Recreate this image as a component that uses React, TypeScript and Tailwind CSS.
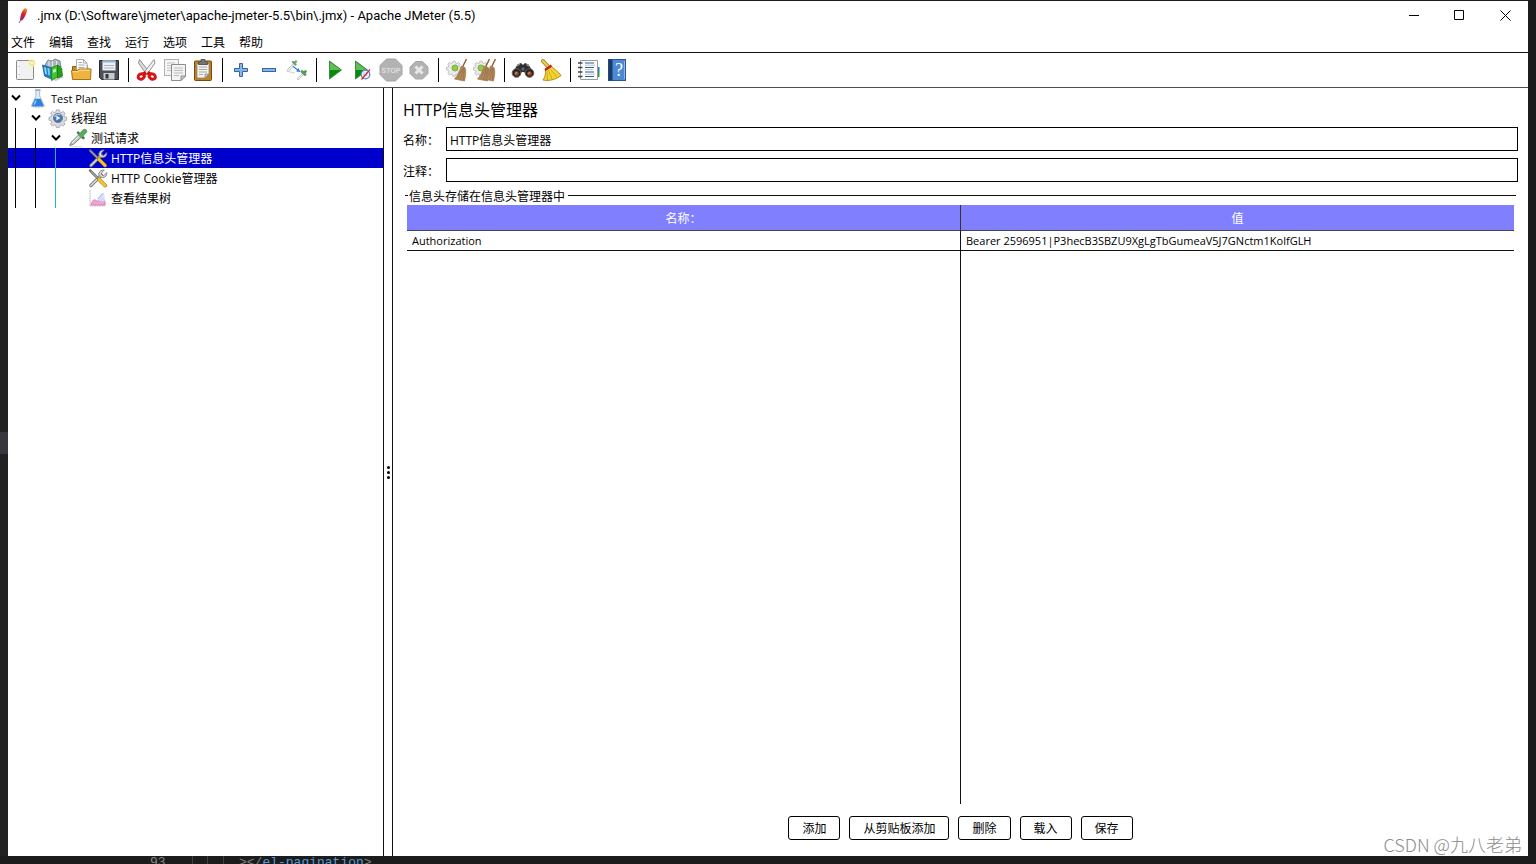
import { useState } from 'react'
import type { ReactNode } from 'react'
import clsx from 'clsx'

const Svg = ({ children, className = 'w-6 h-6' }: { children: ReactNode; className?: string }) => (
  <svg viewBox="0 0 24 24" className={clsx('shrink-0', className)} fill="none" aria-hidden="true">
    {children}
  </svg>
)

const NewIcon = () => (
  <Svg>
    <rect x="3.500" y="2.500" width="17" height="19" rx="0.8" fill="#f1f1f1" stroke="#8b8b8b" />
    <path d="M5.500 4v16" stroke="#fff" />
    <path d="M6 8v1M6 16v1" stroke="#a5a5a5" />
    <circle cx="19" cy="5" r="4" fill="#fbf3a8" opacity="0.7" />
    <circle cx="19" cy="5" r="2" fill="#fffde0" stroke="#f0dd6a" />
  </Svg>
)

const TemplatesIcon = () => (
  <Svg>
    <path d="M4 7l3-5 4 1 3-2 5 2 1 6-13 1z" fill="#a9b4bb" stroke="#66747c" strokeWidth="0.8" />
    <path d="M8 3v5M11.500 3v5M15.500 3v5" stroke="#e7edf0" />
    <path d="M1.500 7l9 3v11l-7-3z" fill="#1b83c4" stroke="#0e5e94" strokeWidth="0.8" />
    <path d="M3 9l2 .6 1 7-2-.8zM6.500 10l2 .6.3 7-1.500-.6z" fill="#8fd0f4" />
    <path d="M20 18l3 1-8 4-3-1z" fill="#999" opacity="0.5" />
    <path d="M10.500 10l6-3v12l-6 3.500z" fill="#43c431" stroke="#1c8516" strokeWidth="0.8" />
    <path d="M16.500 7l4 3 1 8-5 2z" fill="#27a01c" stroke="#1a7413" strokeWidth="0.8" />
    <path d="M12 12l3-1.400v3L12 15z" fill="#c2f2b5" />
  </Svg>
)

const OpenIcon = () => (
  <Svg>
    <path d="M3.500 20V8.500h4L9 7h9v4h2.500v9z" fill="#c98a1b" stroke="#8f5e0a" />
    <path d="M7.500 12V1.500h7L18 5v7z" fill="#fafafa" stroke="#9a9a9a" strokeWidth="0.8" />
    <path d="M14.500 1.500V5H18M9.500 4.500h3.500M9.500 7h6M9.500 9.500h6" stroke="#999" strokeWidth="0.8" />
    <path d="M2.500 12.500h6l1.500-1.500h12l-.5 10.500h-18z" fill="#eeb440" stroke="#a8730f" />
    <path d="M3.500 13.700h5.500l1.500-1.500h10.500" stroke="#fde19a" />
  </Svg>
)

const SaveIcon = () => (
  <Svg>
    <path d="M2.500 2.500h19v19h-17l-2-2z" fill="#4c5056" stroke="#25282c" />
    <rect x="5.500" y="2.500" width="13" height="10" fill="#eef2f6" />
    <path d="M5.500 3.500h13" stroke="#8cb4dd" strokeWidth="2" />
    <path d="M7 7.500h10M7 10h10" stroke="#a9b3bd" />
    <rect x="6.500" y="15" width="11" height="6.500" fill="#c7cacd" />
    <rect x="8.500" y="16" width="3" height="4.500" fill="#33363a" />
  </Svg>
)

const CutIcon = () => (
  <Svg>
    <path d="M4.500 1.500L14.500 14.500l-3 2L3.500 5z" fill="#dcdcdc" stroke="#858585" strokeWidth="0.9" />
    <path d="M19 1.500L9 14.500l3 2L20 5z" fill="#f1f1f1" stroke="#858585" strokeWidth="0.9" />
    <path d="M11 14.500L7 17M12.500 14.500L16.500 17" stroke="#c80e0e" strokeWidth="3.500" />
    <ellipse cx="6.300" cy="18.500" rx="3.300" ry="2.500" stroke="#d81414" strokeWidth="3" transform="rotate(-25 6.300 18.500)" />
    <ellipse cx="17.200" cy="18.500" rx="3.300" ry="2.500" stroke="#d81414" strokeWidth="3" transform="rotate(25 17.200 18.500)" />
  </Svg>
)

const CopyIcon = () => (
  <Svg>
    <rect x="1.500" y="1.500" width="14" height="16" fill="#f5f5f5" stroke="#b0b0b0" />
    <path d="M4 5h8M4 7.500h8M4 10h4M4 12.500h4" stroke="#c4c4c4" />
    <path d="M8.500 6.500h14V18L18 22.500H8.500z" fill="#f3f3f3" stroke="#8c8c8c" />
    <path d="M11 10h9M11 12.500h9M11 15h9M11 17.500h5" stroke="#bcbcbc" />
    <path d="M18 22.500V18h4.500z" fill="#d2d2d2" stroke="#8c8c8c" />
  </Svg>
)

const PasteIcon = () => (
  <Svg>
    <rect x="3.500" y="3" width="17" height="19.500" rx="1" fill="#bd8022" stroke="#764a0b" />
    <path d="M6 5.500h12V16l-4 4H6z" fill="#f3f3f1" stroke="#888" strokeWidth="0.8" />
    <path d="M14 20v-4h4z" fill="#cfcfcf" stroke="#888" strokeWidth="0.8" />
    <path d="M8 9h8M8 11.500h8M8 14h8M8 16.500h4" stroke="#aaa" />
    <path d="M7.500 6.500V4.500L10 3.500V1.500h4v2l2.500 1v2z" fill="#777" stroke="#444" strokeWidth="0.8" />
  </Svg>
)

const PlusIcon = () => (
  <Svg>
    <path d="M10.500 5.500h3v5h5v3h-5v5h-3v-5h-5v-3h5z" fill="#8ab4e4" stroke="#3465a4" />
  </Svg>
)

const MinusIcon = () => (
  <Svg>
    <rect x="5.500" y="10.500" width="13" height="3" fill="#8ab4e4" stroke="#3465a4" />
  </Svg>
)

const ToggleIcon = () => (
  <Svg>
    <path d="M3 12.500L8.500 6.500" stroke="#a9b0a9" strokeWidth="2.400" strokeLinecap="round" />
    <path d="M3 12.500L8.500 6.500" stroke="#f2f5f2" strokeWidth="1.200" strokeLinecap="round" />
    <path d="M8 4l2.500 2.500M9.500 5l1.500-1.500" stroke="#6aa567" strokeWidth="2.400" strokeLinecap="round" />
    <path d="M13 21L17.500 16.500" stroke="#a9b0a9" strokeWidth="2.400" strokeLinecap="round" />
    <path d="M13 21L17.500 16.500" stroke="#f2f5f2" strokeWidth="1.200" strokeLinecap="round" />
    <path d="M17 13.500l3 3M19 15l1.500-1.500" stroke="#569a55" strokeWidth="2.800" strokeLinecap="round" />
    <path d="M8 8.500l5 3.500" stroke="#2f7de8" strokeWidth="1.200" />
    <path d="M15.500 14l-4.500-.5 2.500-3.500z" fill="#2f7de8" />
    <path d="M3 13.500l7 1.500" stroke="#c4c4c4" strokeWidth="0.800" />
  </Svg>
)

const Triangle = ({ x = 6, y = 12 }: { x?: number; y?: number }) => (
  <g transform={`translate(${x} ${y})`}>
    <path d="M.5 -9L12.500 0 .5 9z" fill="#2f9f2f" stroke="#2b7a2b" strokeWidth="0.800" />
    <path d="M1 -7.800L11.500 0H1z" fill="#5fbd5c" />
    <path d="M1 0H11.500L1 8z" fill="#078a0c" />
  </g>
)

const StartIcon = () => (
  <Svg>
    <Triangle />
  </Svg>
)

const StartNoPauseIcon = () => (
  <Svg>
    <Triangle x={4} />
    <circle cx="14.500" cy="16.500" r="4.300" fill="#eaf1fb" stroke="#5a86c4" strokeWidth="1.300" />
    <path d="M13 14.500v4M15.500 14v4" stroke="#a9c0e2" />
    <path d="M10.500 21.500L19 11.500" stroke="#e0232b" strokeWidth="1.200" />
  </Svg>
)

const StopIcon = () => (
  <Svg>
    <path d="M7.500 1h9L23 7.500v9L16.500 23h-9L1 16.500v-9z" fill="#b3b3b3" stroke="#a2a2a2" />
    <text x="12" y="15" textAnchor="middle" className="text-[7px] font-bold" fill="#dedede" fontFamily="Liberation Sans, sans-serif">STOP</text>
  </Svg>
)

const ShutdownIcon = () => (
  <Svg>
    <path d="M8.500 3.500h7L21 9v6.500L15.500 21h-7L3 15.500V9z" fill="#b3b3b3" stroke="#a6a6a6" />
    <path d="M8.500 8.500l7 7M15.500 8.500l-7 7" stroke="#e8e8e8" strokeWidth="3" />
  </Svg>
)

const GEAR =
  'M8.500 1.500h3l.5 2.200 1.700.7 2-1.200 2 2-1.200 2 .7 1.700 2.200.6v3l-2.200.5-.7 1.700 1.200 2-2 2-2-1.200-1.700.7-.5 2.200h-3L8 18.200l-1.700-.7-2 1.200-2-2 1.200-2-.7-1.700L.600 12.500v-3L2.800 8.900l.7-1.700-1.200-2 2-2 2 1.200L8 3.700z'

const Broom = ({ x }: { x: number }) => (
  <g transform={`translate(${x} 0)`}>
    <path d="M20.500 1L16.500 9" stroke="#8a5a2c" strokeWidth="1.400" />
    <path d="M15.500 8l3.500 1.500c1.500 3 .5 9-.5 13.500L8.500 21c3-3 5-8 7-13z" fill="#b68b5c" stroke="#9a7248" strokeWidth="0.700" />
    <path d="M16.500 10l-5 11M17.500 10l-3 12M18.200 10.500L17.500 22" stroke="#8b6740" strokeWidth="0.600" />
  </g>
)

const ClearIcon = () => (
  <Svg>
    <g transform="translate(1 2) scale(0.800)">
      <path d={GEAR} fill="#ebebeb" stroke="#b5b5b5" />
    </g>
    <circle cx="10" cy="10" r="3" fill="#8fcf45" stroke="#709e3b" strokeWidth="0.800" />
    <Broom x={1} />
  </Svg>
)

const ClearAllIcon = () => (
  <Svg>
    <g transform="translate(0 2) scale(0.800)">
      <path d={GEAR} fill="#ebebeb" stroke="#b5b5b5" />
    </g>
    <circle cx="8" cy="10" r="3" fill="#8fcf45" stroke="#709e3b" strokeWidth="0.800" />
    <Broom x={-4} />
    <Broom x={2} />
  </Svg>
)

const SearchIcon = () => (
  <Svg>
    <path d="M2 14L6.500 6.500 10 5l2 2 2-2 3.500 1.500L22 14l-5 4-4-4h-2l-4 4z" fill="#2e2e2e" />
    <path d="M6 8l3-2M15.500 6.500L18 8" stroke="#929292" strokeWidth="1.500" />
    <circle cx="5.500" cy="15" r="4.300" fill="#222" stroke="#626262" />
    <circle cx="18.500" cy="15" r="4.300" fill="#222" stroke="#626262" />
    <circle cx="5.500" cy="15.500" r="2.300" fill="#9a4f2a" />
    <circle cx="18.500" cy="15.500" r="2.300" fill="#9a4f2a" />
    <path d="M4 15.500l2-1M17 15.500l2-1" stroke="#ef9c65" />
    <rect x="10.500" y="9.500" width="3" height="3" fill="#666" />
  </Svg>
)

const ResetSearchIcon = () => (
  <Svg>
    <path d="M4 3L9 8.500" stroke="#a3841c" strokeWidth="4" strokeLinecap="round" />
    <path d="M4 3L9 8.500" stroke="#f0cf4a" strokeWidth="2" strokeLinecap="round" />
    <path d="M12.500 8.500c3 2.500 7 5.500 9.500 9-4 3.500-11.500 6-18 4.500 2.500-3 2.500-6.500 2.500-10z" fill="#f2d535" stroke="#a6830b" strokeWidth="0.900" />
    <path d="M11.500 11.500l7 8M9.500 12.500l4 9.500M8 13.500l.5 8.500" stroke="#c7a41c" strokeWidth="0.900" />
    <path d="M6 12L12.500 7.500" stroke="#c32222" strokeWidth="2.600" />
  </Svg>
)

const FunctionIcon = () => (
  <Svg>
    <rect x="20" y="9" width="2.500" height="5" fill="#2577d0" />
    <rect x="20" y="14" width="2.500" height="5" fill="#2f9b36" />
    <path d="M3.500 2.500h17v19h-17z" fill="#fdfdfd" stroke="#9a9a9a" />
    <path d="M8 5h9M8 9.500h9M8 14h9M8 18.500h9" stroke="#2f5f9d" strokeWidth="1.200" />
    <path d="M8 7.200h10M8 11.700h8M8 16.200h10" stroke="#a5b6cc" strokeWidth="0.800" />
    <path d="M1 5h4.500M1 9.500h4.500M1 14h4.500M1 18.500h4.500" stroke="#444" strokeWidth="1.500" />
  </Svg>
)

const HelpIcon = () => (
  <Svg>
    <rect x="3.500" y="1.500" width="17" height="21" fill="#4b88d6" stroke="#2a5596" />
    <rect x="3.500" y="1.500" width="4" height="21" fill="#1d3a66" />
    <path d="M19.500 3v18" stroke="#8db9ef" />
    <text x="14" y="18" textAnchor="middle" className="text-[18px]" fill="#fff" fontFamily="Liberation Serif, serif">?</text>
  </Svg>
)

const FlaskIcon = () => (
  <Svg className="w-5 h-5">
    <ellipse cx="12" cy="21.500" rx="8.500" ry="2" fill="#bcc7d2" />
    <path d="M9.500 2.500h4.500v7l5 11c0 1.500-1 2-2 2H6.500c-1.500 0-2-1-2-2l5-11z" fill="#e6edf5" stroke="#9bafc4" />
    <path d="M8.500 13h6.500l3.500 7.500c0 1-.5 1.500-1.500 1.500H6.500c-1 0-1.500-.5-1.500-1.500z" fill="#2b83dd" />
    <path d="M9.500 15l-2 5" stroke="#9dcffa" strokeWidth="1.500" />
    <path d="M8.500 2.500h6.500" stroke="#8a9db1" strokeWidth="1.500" />
  </Svg>
)

const GearIcon = () => (
  <Svg className="w-5 h-5">
    <g transform="translate(0.500 0.500) scale(1.130)">
      <path d={GEAR} fill="#dadcdf" stroke="#a1a6ad" strokeWidth="0.900" />
    </g>
    <circle cx="12" cy="12" r="5.500" fill="#4a74ad" stroke="#5c7699" />
    <path d="M8 11a4.500 4.500 0 0 1 7-2.500" stroke="#a9c6ea" strokeWidth="1.600" />
    <path d="M10 9l5 3-5 3z" fill="#e6eef8" />
  </Svg>
)

const PipetteIcon = () => (
  <Svg className="w-5 h-5">
    <path d="M3 22.500h14" stroke="#d9d9d9" strokeWidth="1.200" />
    <path d="M2 21l2-4L13 8l3 3-9.500 8.500z" fill="#bcc3bc" stroke="#7c857c" strokeWidth="1.200" />
    <path d="M5 18l8-8" stroke="#fff" strokeWidth="1.200" />
    <path d="M12 5.500l6.500 6.500" stroke="#3c7a41" strokeWidth="3" strokeLinecap="round" />
    <path d="M16 8l4-4" stroke="#5ba95c" strokeWidth="6" strokeLinecap="round" />
  </Svg>
)

const ToolsIcon = () => (
  <Svg className="w-5 h-5">
    <path d="M3.500 21L16 8.500" stroke="#777" strokeWidth="4" strokeLinecap="round" />
    <path d="M3.500 21L16 8.500" stroke="#d8d8d8" strokeWidth="2" strokeLinecap="round" />
    <path d="M19.500 2.500L16 6l.5 2.500 2.500.5 3.500-3.500c.7 3-1.500 6-5 6-3.500 0-5-2.500-4.500-5 .5-2.500 3.500-4.700 6.500-4z" fill="#d8d8d8" stroke="#777" />
    <path d="M2.500 3L12 12.500" stroke="#6c6c6c" strokeWidth="3" strokeLinecap="round" />
    <path d="M3 3.500l8.500 8.500" stroke="#d2d2d2" strokeWidth="1" />
    <path d="M13 13.500l7.500 7.500" stroke="#a37809" strokeWidth="4.500" strokeLinecap="round" />
    <path d="M13 13.500l7.500 7.500" stroke="#f5c62c" strokeWidth="3" strokeLinecap="round" />
  </Svg>
)

const GraphIcon = () => (
  <Svg className="w-5 h-5">
    <path d="M2.500 2.500v19h18" stroke="#a3a3a3" strokeDasharray="2 1" />
    <path d="M3.500 20.500c1-4 3-7.500 5.500-6s3 2 5-1 4-1 6.500 3v4z" fill="#f0a4d3" stroke="#d974b4" />
    <path d="M11 13c3-1 4-6 7-6.500 3 0 1.500 6 3 8-3 2.500-7 2-10-1.500z" fill="#cfe2f8" opacity="0.900" />
    <path d="M11.500 13c3-1 3.500-6 7-6.500" stroke="#7eabe2" />
  </Svg>
)

const FeatherIcon = () => (
  <Svg className="w-4 h-4">
    <defs>
      <linearGradient id="feather" x1="16" y1="1" x2="6" y2="20" gradientUnits="userSpaceOnUse">
        <stop offset="0" stopColor="#f69923" />
        <stop offset="0.450" stopColor="#d22128" />
        <stop offset="1" stopColor="#7e2c8b" />
      </linearGradient>
    </defs>
    <path d="M13.500 0.500c3 0 4 2 2.500 6-1.500 4.500-4 9.500-6.500 12L6 19.500C6.500 12 9 3 13.500.5z" fill="url(#feather)" />
    <path d="M6.500 19l-2 3.500" stroke="#7e2c8b" strokeWidth="1.200" />
  </Svg>
)

const toolbar = [
  [
    { label: '新建', Icon: NewIcon },
    { label: '模板', Icon: TemplatesIcon },
    { label: '打开', Icon: OpenIcon },
    { label: '保存测试计划', Icon: SaveIcon },
  ],
  [
    { label: '剪切', Icon: CutIcon },
    { label: '复制', Icon: CopyIcon },
    { label: '粘贴', Icon: PasteIcon },
  ],
  [
    { label: '全部展开', Icon: PlusIcon },
    { label: '全部折叠', Icon: MinusIcon },
    { label: '切换', Icon: ToggleIcon },
  ],
  [
    { label: '启动', Icon: StartIcon },
    { label: '不停顿开始', Icon: StartNoPauseIcon },
    { label: '停止', Icon: StopIcon },
    { label: '关闭', Icon: ShutdownIcon },
  ],
  [
    { label: '清除', Icon: ClearIcon },
    { label: '清除全部', Icon: ClearAllIcon },
  ],
  [
    { label: '查找', Icon: SearchIcon },
    { label: '重置搜索', Icon: ResetSearchIcon },
  ],
  [
    { label: '函数助手', Icon: FunctionIcon },
    { label: '帮助', Icon: HelpIcon },
  ],
]

const menus = ['文件', '编辑', '查找', '运行', '选项', '工具', '帮助']

const tree = [
  { level: 0, label: 'Test Plan', Icon: FlaskIcon, open: true },
  { level: 1, label: '线程组', Icon: GearIcon, open: true },
  { level: 2, label: '测试请求', Icon: PipetteIcon, open: true },
  { level: 3, label: 'HTTP信息头管理器', Icon: ToolsIcon, open: false },
  { level: 3, label: 'HTTP Cookie管理器', Icon: ToolsIcon, open: false },
  { level: 3, label: '查看结果树', Icon: GraphIcon, open: false },
]

const headers = [
  { name: 'Authorization', value: 'Bearer 2596951|P3hecB3SBZU9XgLgTbGumeaV5J7GNctm1KolfGLH' },
]

const actions = ['添加', '从剪贴板添加', '删除', '载入', '保存']

const TitleBar = () => (
  <header className="flex h-[29px] shrink-0 items-center pl-2">
    <FeatherIcon />
    <h1 className="ml-[5px] flex-1 font-['Roboto',sans-serif] text-[13px] whitespace-nowrap">
      .jmx (D:\Software\jmeter\apache-jmeter-5.5\bin\.jmx) - Apache JMeter (5.5)
    </h1>
    <div className="flex h-full">
      <button aria-label="最小化" className="flex w-[46px] items-center justify-center">
        <svg width="11" height="11" fill="none" stroke="#000"><path d="M1 5.500h10" /></svg>
      </button>
      <button aria-label="最大化" className="flex w-[46px] items-center justify-center">
        <svg width="11" height="11" fill="none" stroke="#000"><path d="M.5 .5h9v9h-9z" /></svg>
      </button>
      <button aria-label="关闭窗口" className="flex w-[46px] items-center justify-center">
        <svg width="11" height="11" fill="none" stroke="#000"><path d="M.5 .5l10 10M10.500 .5l-10 10" /></svg>
      </button>
    </div>
  </header>
)

const MenuBar = () => (
  <nav className="flex h-[23px] shrink-0 items-center gap-[14px] border-b border-[#111] pt-[3px] pl-[3px]">
    {menus.map((menu) => (
      <button key={menu}>{menu}</button>
    ))}
  </nav>
)

const Toolbar = () => (
  <div role="toolbar" aria-label="工具栏" className="flex h-[35px] shrink-0 items-center border-b border-[#4d4d4d] pl-[3px]">
    {toolbar.map((group, i) => (
      <div key={i} className="flex items-center">
        {i > 0 && <span className="mx-1 h-6 w-0.5 border-r border-black" />}
        {group.map(({ label, Icon }) => (
          <button key={label} aria-label={label} title={label} className="flex h-7 w-7 items-center justify-center">
            <Icon />
          </button>
        ))}
      </div>
    ))}
  </div>
)

const TestTree = ({ selected, onSelect }: { selected: string; onSelect: (label: string) => void }) => (
  <aside className="w-[376px] shrink-0 border-r border-[#111]">
    {tree.map(({ level, label, Icon, open }) => (
      <button
        key={label}
        onClick={() => onSelect(label)}
        className={clsx('flex h-5 w-full items-center', selected === label && 'bg-[#0000cd] text-white')}
      >
        {Array.from({ length: level }, (_, i) => (
          <span
            key={i}
            className={clsx('ml-[7px] h-full w-[13px] border-l', i === 2 ? 'border-[#1fb5cc]' : 'border-black')}
          />
        ))}
        <span className={clsx('w-5 shrink-0', open && 'pl-[3px]')}>
          {open && (
            <svg width="10" height="8" fill="none" stroke="#000" strokeWidth="2">
              <path d="M1 1.500l4 4 4-4" />
            </svg>
          )}
        </span>
        <Icon />
        <span className={clsx('ml-[3px] pt-0.5 whitespace-nowrap', level === 0 && 'text-[11px]')}>{label}</span>
      </button>
    ))}
  </aside>
)

const HeaderTable = () => (
  <table className="h-full w-full table-fixed border-collapse">
    <thead>
      <tr className="h-[25px] border-b border-[#444] bg-[#8080ff] text-white">
        <th className="border-r border-[#333] p-0 pt-1 font-normal">名称：</th>
        <th className="p-0 pt-1 font-normal">值</th>
      </tr>
    </thead>
    <tbody className="text-[11px]">
      {headers.map(({ name, value }) => (
        <tr key={name} className="h-5 border-b border-[#111]">
          <td className="border-r border-[#111] px-[5px] pt-0.5 pb-0">{name}</td>
          <td className="px-[5px] pt-0.5 pb-0">{value}</td>
        </tr>
      ))}
      <tr>
        <td className="border-r border-[#111]" />
        <td />
      </tr>
    </tbody>
  </table>
)

const HeaderManager = () => {
  const [name, setName] = useState('HTTP信息头管理器')
  const [comment, setComment] = useState('')

  return (
    <main className="flex min-w-0 flex-1 flex-col px-[10px] pt-[10px] pb-4">
      <h2 className="text-base leading-6">HTTP信息头管理器</h2>
      <div className="mt-[5px] flex items-center">
        <label htmlFor="name" className="w-[43px] pt-[3px]">名称：</label>
        <input
          id="name"
          value={name}
          onChange={(e) => setName(e.target.value)}
          className="h-6 min-w-0 flex-1 border border-black px-[3px] pt-0.5 outline-none"
        />
      </div>
      <div className="mt-[7px] flex items-center">
        <label htmlFor="comment" className="w-[43px] pt-[3px]">注释：</label>
        <input
          id="comment"
          value={comment}
          onChange={(e) => setComment(e.target.value)}
          className="h-6 min-w-0 flex-1 border border-black px-[3px] pt-0.5 outline-none"
        />
      </div>
      <fieldset className="mx-[2px] mt-[3px] flex min-h-0 flex-1 flex-col border-t border-[#111] px-[2px]">
        <legend className="ml-px pt-1 pr-[3px] pl-px leading-4">信息头存储在信息头管理器中</legend>
        <HeaderTable />
      </fieldset>
      <div className="mt-3 flex justify-center gap-[9px]">
        {actions.map((action) => (
          <button key={action} className="h-6 rounded-[3px] border border-black px-[13px] pt-0.5">
            {action}
          </button>
        ))}
      </div>
    </main>
  )
}

const App = () => {
  const [selected, setSelected] = useState('HTTP信息头管理器')

  return (
    <div className="relative flex h-screen flex-col overflow-hidden bg-[#1c1c1c] pt-px font-['Open_Sans','Noto_Sans_CJK_SC',sans-serif] text-xs text-black">
      <div className="flex min-h-0 flex-1 pr-2">
        <div className="flex w-2 shrink-0 flex-col justify-center bg-[#222]">
          <div className="mt-7 h-[22px] bg-[#37373d]" />
        </div>
        <div className="flex min-w-0 flex-1 flex-col bg-white">
          <TitleBar />
          <MenuBar />
          <Toolbar />
          <div className="flex min-h-0 flex-1">
            <TestTree selected={selected} onSelect={setSelected} />
            <div className="flex w-[9px] shrink-0 flex-col items-center justify-center gap-0.5 border-r border-[#111]">
              <span className="h-[3px] w-[3px] rounded-full bg-black" />
              <span className="h-[3px] w-[3px] rounded-full bg-black" />
              <span className="h-[3px] w-[3px] rounded-full bg-black" />
            </div>
            <HeaderManager />
          </div>
        </div>
      </div>

      {/* Editor line showing under the window */}
      <div className="flex h-2 shrink-0 overflow-hidden pl-[150px] font-['Liberation_Mono',monospace] text-[13px] leading-[14px] whitespace-pre">
        <span className="w-[42px] text-[#858585]">93</span>
        <span className="w-[15px] border-l border-[#404040]" />
        <span className="w-4 border-l border-[#404040]" />
        <span className="w-4 border-l border-[#404040]" />
        <span className="text-[#808080]">&gt;&lt;/</span>
        <span className="text-[#569cd6]">el-pagination</span>
        <span className="text-[#808080]">&gt;</span>
      </div>

      <p className="absolute right-[14px] bottom-2 font-['Noto_Sans_CJK_SC',sans-serif] text-lg leading-6 font-light text-[#8c8c8c]">
        CSDN @九八老弟
      </p>
    </div>
  )
}

export default App
